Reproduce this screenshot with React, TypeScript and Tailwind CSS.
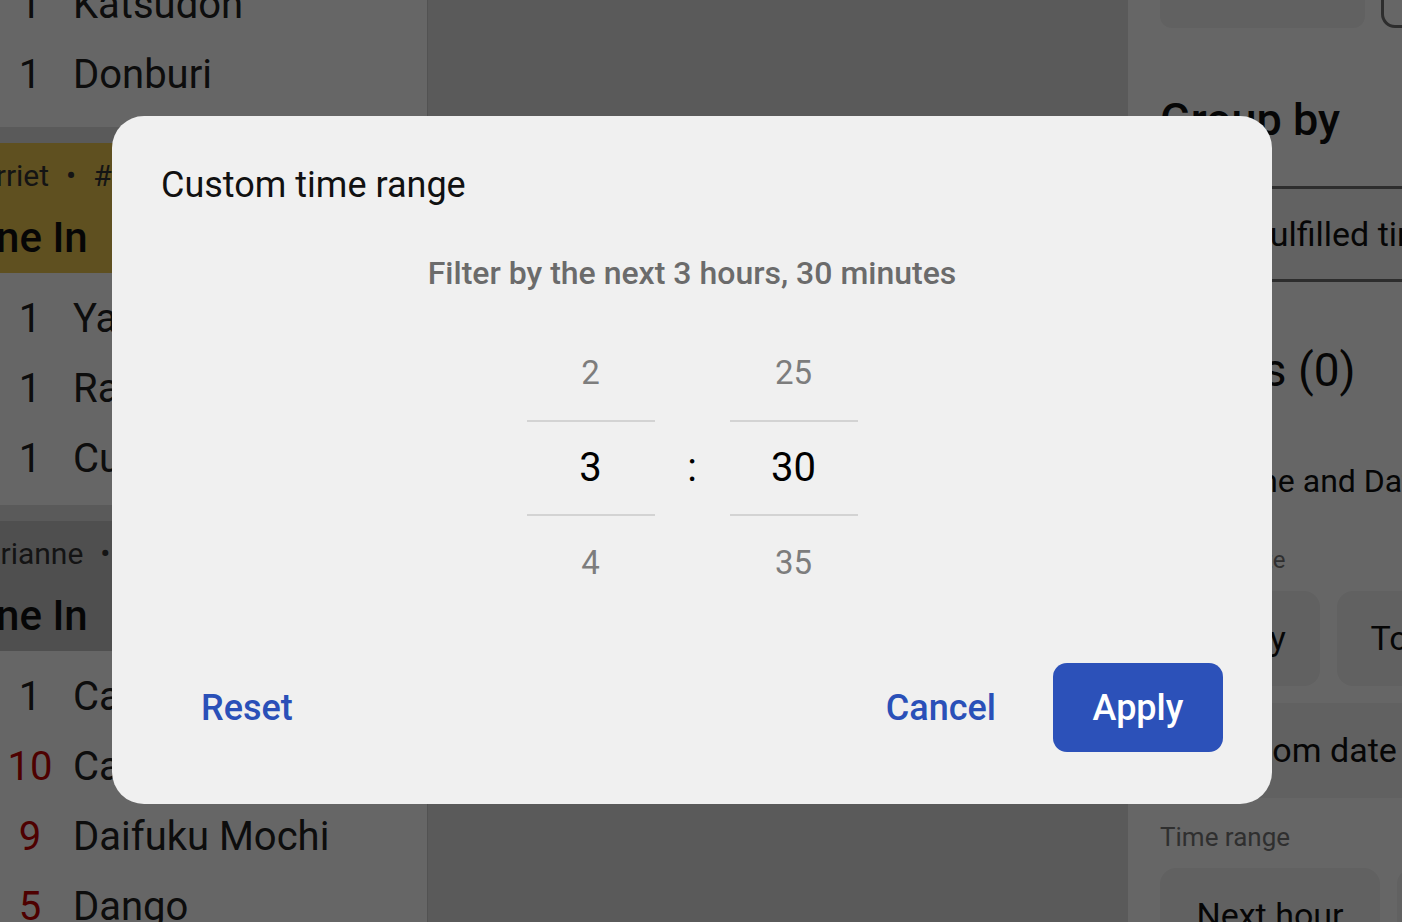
const CARD_A = [
  { qty: "1", name: "Katsudon" },
  { qty: "1", name: "Donburi" },
];

const CARD_B = [
  { qty: "1", name: "Yakisoba" },
  { qty: "1", name: "Ramen" },
  { qty: "1", name: "Curry Rice" },
];

const CARD_C = [
  { qty: "1", name: "California Roll" },
  { qty: "10", name: "Castella", hot: true },
  { qty: "9", name: "Daifuku Mochi", hot: true },
  { qty: "5", name: "Dango", hot: true },
];

function ItemRow({ qty, name, hot }: { qty: string; name: string; hot?: boolean }) {
  return (
    <div className="flex h-[70px] items-center whitespace-nowrap text-[40px] leading-[70px]">
      <span className={`w-[60px] shrink-0 text-center ${hot ? "text-[#c20000]" : "text-[#222]"}`}>{qty}</span>
      <span className="ml-[13px] text-[#222]">{name}</span>
    </div>
  );
}

function OrderHeader({ who, num, tone }: { who: string; num: string; tone: string }) {
  return (
    <div className={`flex h-[130px] flex-col whitespace-nowrap pt-[14px] ${tone}`}>
      <span className="-ml-[42px] text-[30px] leading-[38px] text-[#333]">
        {who}
        <span className="mx-[17px]">•</span>
        {num}
      </span>
      <span className="-ml-[42px] mt-[18px] text-[42px] font-medium leading-[50px] text-[#111]">Dine In</span>
    </div>
  );
}

function Chip({ label, w }: { label: string; w: string }) {
  return (
    <div className={`flex h-[95px] shrink-0 items-center justify-center rounded-[16px] bg-[#f2f2f2] text-[34px] text-[#111] ${w}`}>
      {label}
    </div>
  );
}

export default function App() {
  return (
    <div className="relative h-[922px] w-[1402px] overflow-hidden font-[Roboto,sans-serif]">
      <div className="flex h-full">
        {/* order tickets column */}
        <div className="w-[428px] shrink-0 overflow-hidden border-r border-[#cdcdcd] bg-[#e1e1e1]">
          <div className="-mt-[41px] flex flex-col gap-4">
            <div className="bg-white pb-[17px] pt-[11px]">
              {CARD_A.map((r) => (
                <ItemRow key={r.name} {...r} />
              ))}
            </div>
            <div className="bg-white">
              <OrderHeader who="Harriet" num="#1042" tone="bg-[#eec850]" />
              <div className="py-[11px]">
                {CARD_B.map((r) => (
                  <ItemRow key={r.name} {...r} />
                ))}
              </div>
            </div>
            <div className="bg-white">
              <OrderHeader who="Marianne" num="#1043" tone="bg-[#c6c6c6]" />
              <div className="py-[11px]">
                {CARD_C.map((r) => (
                  <ItemRow key={r.name} {...r} />
                ))}
              </div>
            </div>
          </div>
        </div>

        <div className="flex-1 bg-[#e1e1e1]" />

        {/* filter panel */}
        <div className="w-[274px] shrink-0 overflow-hidden bg-white">
          <div className="-mt-[67px] flex flex-col pl-[32px]">
            <div className="flex gap-4">
              <div className="h-[95px] w-[205px] shrink-0 rounded-[12px] bg-[#f2f2f2]" />
              <div className="h-[95px] w-[160px] shrink-0 rounded-[14px] border-[3px] border-[#707070]" />
            </div>
            <h2 className="mt-[66px] whitespace-nowrap text-[45px] font-medium leading-[52px] text-[#111]">Group by</h2>
            <div className="-ml-[32px] mt-[40px] flex h-[96px] items-center border-y-[3px] border-[#707070] bg-[#f5f5f5] pl-[89px] text-[34px] whitespace-nowrap text-[#111]">
              Unfulfilled time
            </div>
            <h2 className="mt-[62px] whitespace-nowrap text-[46px] leading-[52px] text-[#111]">Filters (0)</h2>
            <h3 className="mt-[66px] whitespace-nowrap text-[32px] leading-[38px] text-[#111]">Due Time and Date</h3>
            <span className="mt-[45px] whitespace-nowrap text-[24px] leading-[30px] text-[#777]">Pickup date</span>
            <div className="mt-[16px] flex gap-[17px]">
              <Chip label="Today" w="w-[160px]" />
              <Chip label="Tomorrow" w="w-[222px]" />
            </div>
            <div className="mt-[17px] flex">
              <Chip label="Custom date" w="w-[280px]" />
            </div>
            <span className="mt-[23px] whitespace-nowrap text-[26px] leading-[32px] text-[#777]">Time range</span>
            <div className="mt-[15px] flex gap-[17px]">
              <Chip label="Next hour" w="w-[220px]" />
              <Chip label="Next 2 hours" w="w-[240px]" />
            </div>
          </div>
        </div>
      </div>

      {/* scrim */}
      <div className="absolute inset-0 bg-black/60" />

      {/* dialog */}
      <div className="absolute left-[112px] top-[116px] flex w-[1160px] flex-col rounded-[32px] bg-[#f0f0f0] px-[49px] pb-[52px] pt-[47px]">
        <h1 className="text-[36px] leading-[44px] text-[#111]">Custom time range</h1>
        <p className="mt-[47px] text-center text-[32px] font-medium leading-[38px] text-[#6b6b6b]">
          Filter by the next 3 hours, 30 minutes
        </p>

        <div className="mt-[34px] flex justify-center">
          <div className="flex w-[128px] flex-col items-center">
            <span className="flex h-[94px] items-center text-[33px] text-[#7d7d7d]">2</span>
            <span className="h-[2px] w-full bg-[#d3d3d3]" />
            <span className="flex h-[92px] items-center text-[40px] text-black">3</span>
            <span className="h-[2px] w-full bg-[#d3d3d3]" />
            <span className="flex h-[94px] items-center text-[33px] text-[#7d7d7d]">4</span>
          </div>
          <div className="flex w-[75px] items-center justify-center text-[40px] text-black">:</div>
          <div className="flex w-[128px] flex-col items-center">
            <span className="flex h-[94px] items-center text-[33px] text-[#7d7d7d]">25</span>
            <span className="h-[2px] w-full bg-[#d3d3d3]" />
            <span className="flex h-[92px] items-center text-[40px] text-black">30</span>
            <span className="h-[2px] w-full bg-[#d3d3d3]" />
            <span className="flex h-[94px] items-center text-[33px] text-[#7d7d7d]">35</span>
          </div>
        </div>

        <div className="mt-[53px] flex items-center">
          <button className="h-[89px] px-[40px] text-[36px] font-medium text-[#2a50b8]">Reset</button>
          <div className="flex-1" />
          <button className="h-[89px] px-[40px] text-[36px] font-medium text-[#2a50b8]">Cancel</button>
          <button className="ml-[17px] h-[89px] w-[170px] rounded-[14px] bg-[#2c51b9] text-[36px] font-medium text-white">
            Apply
          </button>
        </div>
      </div>
    </div>
  );
}
